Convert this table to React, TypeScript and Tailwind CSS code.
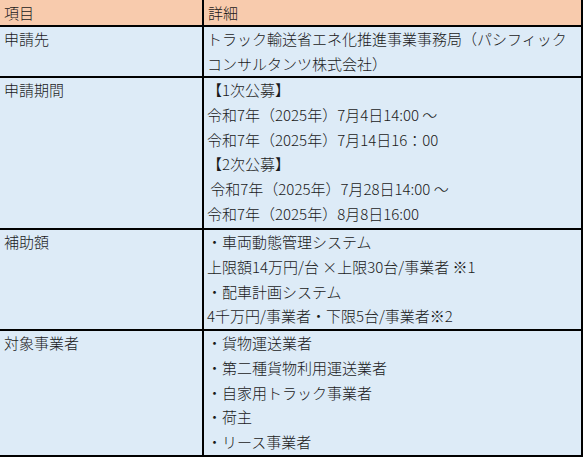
const rows: { label: string; lines: string[]; h: string }[] = [
  {
    label: '申請先',
    lines: ['トラック輸送省エネ化推進事業事務局（パシフィック', 'コンサルタンツ株式会社）'],
    h: 'h-[51px]',
  },
  {
    label: '申請期間',
    lines: [
      '【1次公募】',
      '令和7年（2025年）7月4日14:00 ～',
      '令和7年（2025年）7月14日16：00',
      '【2次公募】',
      ' 令和7年（2025年）7月28日14:00 ～',
      '令和7年（2025年）8月8日16:00',
    ],
    h: 'h-[152px]',
  },
  {
    label: '補助額',
    lines: [
      '・車両動態管理システム',
      '上限額14万円/台 ×上限30台/事業者 ※1',
      '・配車計画システム',
      '4千万円/事業者・下限5台/事業者※2',
    ],
    h: 'h-[101px]',
  },
  {
    label: '対象事業者',
    lines: ['・貨物運送業者', '・第二種貨物利用運送業者', '・自家用トラック事業者', '・荷主', '・リース事業者'],
    h: 'h-[126px]',
  },
];

export default function App() {
  return (
    <div
      className="w-[583px] h-[458px] bg-white text-[15px] font-light text-[#1a1a1a] overflow-hidden"
      style={{ fontFamily: '"Noto Sans CJK JP", "Noto Sans", sans-serif' }}
    >
      {/* Header */}
      <div className="flex h-[27px] bg-[#f8cbad] border-b-2 border-black leading-[25px]">
        <div className="w-[204px] border-r-2 border-black pl-[4px]">項目</div>
        <div className="flex-1 border-r-2 border-black pl-[4px]">詳細</div>
      </div>

      {rows.map((row) => (
        <div key={row.label} className={`flex ${row.h} bg-[#ddebf7] border-b-2 border-black leading-[24.8px]`}>
          <div className="w-[204px] border-r-2 border-black pl-[4px]">{row.label}</div>
          <div className="flex-1 border-r-2 border-black pl-[3px] whitespace-pre">
            {row.lines.map((line, i) => (
              <div key={i}>{line}</div>
            ))}
          </div>
        </div>
      ))}
    </div>
  );
}
